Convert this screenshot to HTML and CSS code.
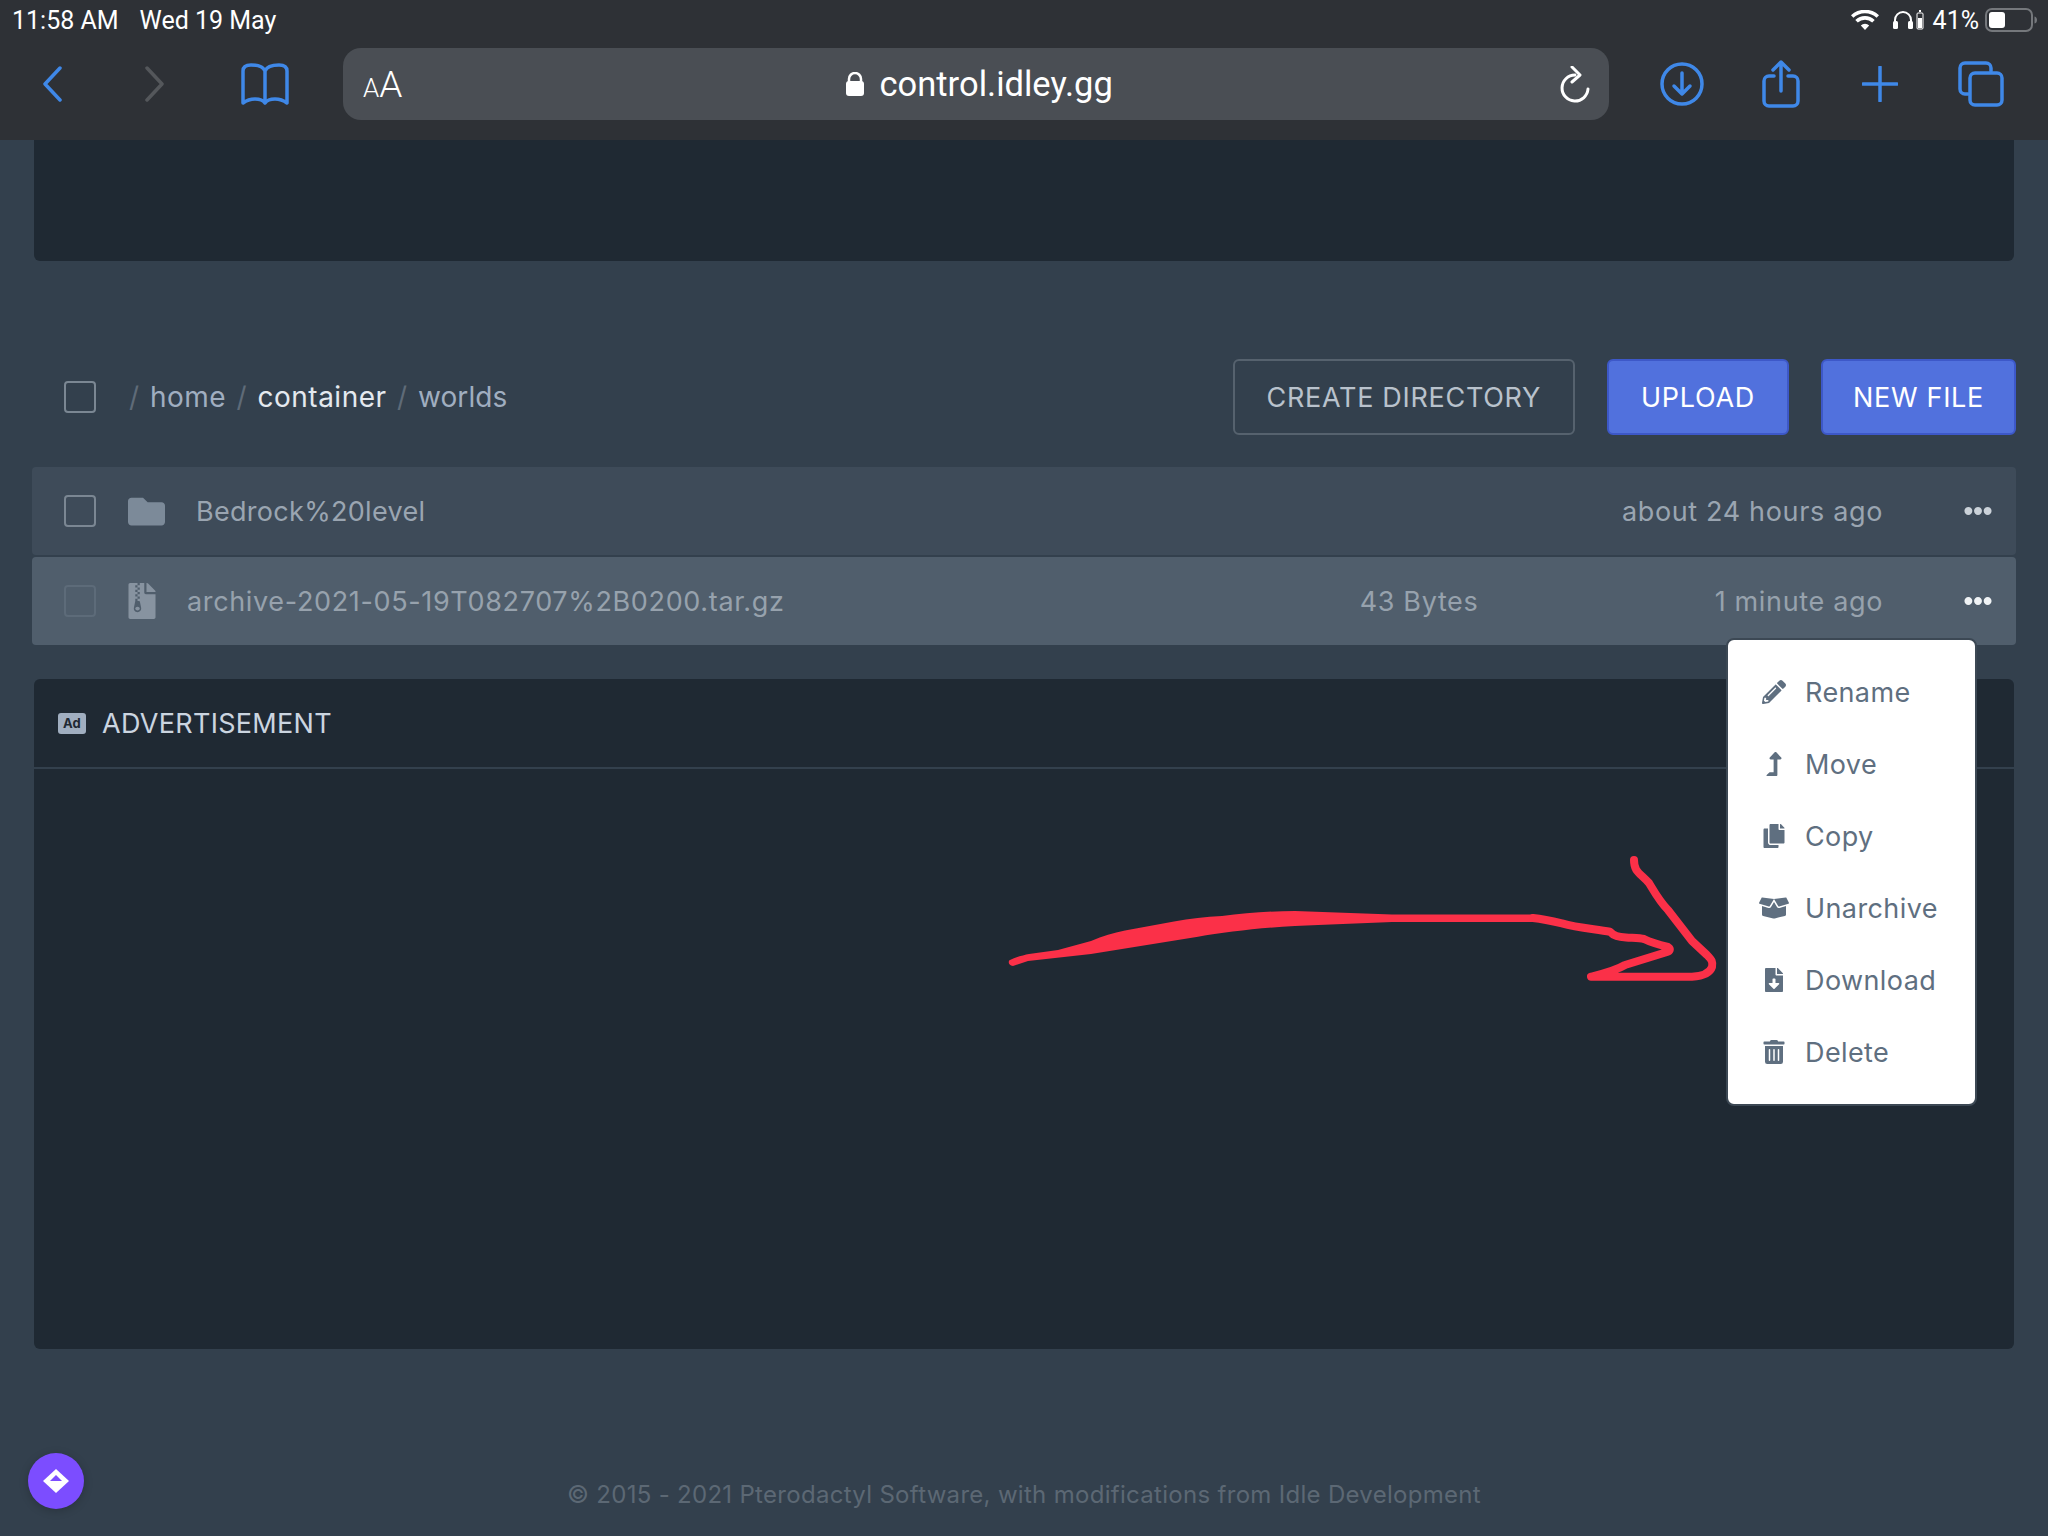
FILE: index.html
```html
<!DOCTYPE html>
<html lang="en">
<head>
    <meta charset="UTF-8">
    <title>control.idley.gg</title>
    <link rel="stylesheet" href="styles.css">
</head>
<body>
    <header class="browser">
        <div class="status-bar">
            <span class="clock">11:58 AM</span>
            <span class="date">Wed 19 May</span>
            <span class="status-right">
                <svg class="wifi" viewBox="0 0 28 20" width="28" height="20"><path d="M14 20l-4.200-4.600a6 6 0 0 1 8.400 0zM6.800 12.600l-2.500-2.700a14 14 0 0 1 19.400 0l-2.500 2.700a10.400 10.400 0 0 0-14.400 0zM2.400 7.800L0 5.200a20.500 20.500 0 0 1 28 0l-2.400 2.600a17 17 0 0 0-23.200 0z"/></svg>
                <svg class="phones" viewBox="0 0 20 19" width="20" height="19"><path d="M2 16V9a8 8 0 0 1 16 0v7" fill="none" stroke="#fff" stroke-width="2"/><rect x="0" y="10" width="5" height="8" rx="1.500"/><rect x="15" y="10" width="5" height="8" rx="1.500"/></svg>
                <svg class="phone-bat" viewBox="0 0 8 20" width="8" height="20"><rect x="1" y="3" width="6" height="16" rx="1" fill="none" stroke="#fff" stroke-width="1"/><rect x="3" y="0" width="2" height="2"/><rect x="2" y="8" width="4" height="10"/></svg>
                <span class="percent">41%</span>
                <svg class="battery" viewBox="0 0 52 24" width="52" height="24"><rect x="1" y="1" width="46" height="22" rx="6" fill="none" stroke="#75787c" stroke-width="2"/><rect x="4" y="4" width="16" height="16" rx="3" fill="#fff"/><path d="M49.500 8.500c2 .5 2.500 2 2.500 3.500s-.5 3-2.500 3.500z" fill="#75787c"/></svg>
            </span>
        </div>
        <div class="toolbar">
            <svg class="tool back" viewBox="0 0 20 36" width="20" height="36"><path d="M18 2L3 18l15 16"/></svg>
            <svg class="tool forward" viewBox="0 0 20 36" width="20" height="36"><path d="M2 2l15 16L2 34"/></svg>
            <svg class="tool book" viewBox="0 0 48 42" width="48" height="42"><path d="M24 8C22 3 17 2 10 2 5 2 2 4 2 8v32c4-3 8-4 12-4 4 0 8 1 10 4 2-3 6-4 10-4 4 0 8 1 12 4V8c0-4-3-6-8-6-7 0-12 1-14 6zm0 0v31"/></svg>
            <div class="url-bar">
                <span class="aa"><small>A</small>A</span>
                <span class="url">
                    <svg viewBox="0 0 18 24" width="18" height="24"><path d="M3 10V7a6 6 0 0 1 12 0v3" fill="none" stroke="#fff" stroke-width="2.500"/><rect x="0" y="9" width="18" height="15" rx="3"/></svg>
                    control.idley.gg
                </span>
                <svg class="reload" viewBox="0 0 30 37" width="30" height="37"><path d="M15 9a13 13 0 1 0 13 14" /><path d="M12 1l8 8-8 7"/></svg>
            </div>
            <div class="tool-right">
                <svg class="tool" viewBox="0 0 44 44" width="44" height="44"><circle cx="22" cy="22" r="20"/><path d="M22 11v21m-8-8l8 8 8-8"/></svg>
                <svg class="tool share" viewBox="0 0 38 48" width="38" height="48"><path d="M12 16H7a5 5 0 0 0-5 5v20a5 5 0 0 0 5 5h24a5 5 0 0 0 5-5V21a5 5 0 0 0-5-5h-5M19 31V2m-8 8l8-8 8 8"/></svg>
                <svg class="tool plus" viewBox="0 0 36 36" width="36" height="36"><path d="M18 1v34M1 18h34"/></svg>
                <svg class="tool" viewBox="0 0 46 46" width="46" height="46"><path d="M10 33H7a5 5 0 0 1-5-5V7a5 5 0 0 1 5-5h21a5 5 0 0 1 5 5v3"/><rect x="12" y="12" width="32" height="32" rx="5"/></svg>
            </div>
        </div>
    </header>

    <main class="content">
        <div class="panel-top"></div>

        <div class="file-head">
            <span class="check"></span>
            <div class="crumbs">
                <span class="sep">/</span> <span>home</span>
                <span class="sep">/</span> <span class="current">container</span>
                <span class="sep">/</span> <span class="last">worlds</span>
            </div>
            <button class="btn btn-outline">CREATE DIRECTORY</button>
            <button class="btn btn-blue">UPLOAD</button>
            <button class="btn btn-blue btn-new">NEW FILE</button>
        </div>

        <div class="file-row">
            <span class="check"></span>
            <svg class="file-icon" viewBox="0 0 512 512" width="37" height="37"><path d="M464 128H272l-64-64H48C21.490 64 0 85.490 0 112v288c0 26.510 21.490 48 48 48h416c26.510 0 48-21.490 48-48V176c0-26.510-21.490-48-48-48z"/></svg>
            <span class="file-name folder-name">Bedrock%20level</span>
            <span class="file-time">about 24 hours ago</span>
            <svg class="dots" viewBox="0 0 512 512" width="28" height="28"><path d="M328 256c0 39.800-32.200 72-72 72s-72-32.200-72-72 32.200-72 72-72 72 32.200 72 72zm104-72c-39.800 0-72 32.200-72 72s32.200 72 72 72 72-32.200 72-72-32.200-72-72-72zm-352 0c-39.800 0-72 32.200-72 72s32.200 72 72 72 72-32.200 72-72-32.200-72-72-72z"/></svg>
        </div>

        <div class="file-row file-row-open">
            <span class="check"></span>
            <svg class="file-icon zip" viewBox="0 0 384 512" width="28" height="36"><path d="M377 105L279.100 7c-4.500-4.500-10.600-7-17-7H256v128h128v-6.100c0-6.300-2.500-12.400-7-16.900zM128.400 336c-17.900 0-32.400 12.100-32.400 27 0 15 14.600 27 32.500 27s32.400-12.100 32.400-27-14.600-27-32.500-27zM224 136V0h-63.600v32h-32V0H24C10.700 0 0 10.700 0 24v464c0 13.300 10.700 24 24 24h336c13.300 0 24-10.700 24-24V160H248c-13.200 0-24-10.800-24-24zM95.900 32h32v32h-32zm32.300 384c-33.200 0-58-30.400-51.400-62.900L96.400 256v-32h32v-32h-32v-32h32v-32h-32V96h32V64h32v32h-32v32h32v32h-32v32h32v32h-32v32h22.100c5.700 0 10.700 4.100 11.800 9.700l17.300 87.700c6.400 32.400-18.400 62.600-51.400 62.600z"/></svg>
            <span class="file-name">archive-2021-05-19T082707%2B0200.tar.gz</span>
            <span class="file-size">43 Bytes</span>
            <span class="file-time">1 minute ago</span>
            <svg class="dots" viewBox="0 0 512 512" width="28" height="28"><path d="M328 256c0 39.800-32.200 72-72 72s-72-32.200-72-72 32.200-72 72-72 72 32.200 72 72zm104-72c-39.800 0-72 32.200-72 72s32.200 72 72 72 72-32.200 72-72-32.200-72-72-72zm-352 0c-39.800 0-72 32.200-72 72s32.200 72 72 72 72-32.200 72-72-32.200-72-72-72z"/></svg>

            <ul class="menu">
                <li><svg viewBox="0 0 512 512" width="24" height="24"><path d="M497.900 142.100l-46.100 46.100c-4.700 4.700-12.300 4.700-17 0l-111-111c-4.700-4.700-4.700-12.300 0-17l46.100-46.100c18.700-18.700 49.100-18.700 67.900 0l60.100 60.100c18.800 18.700 18.800 49.100 0 67.900zM284.200 99.800L21.600 362.400.4 483.900c-2.900 16.400 11.400 30.600 27.800 27.800l121.500-21.300 262.600-262.600c4.700-4.700 4.700-12.300 0-17l-111-111c-4.800-4.700-12.400-4.700-17.100 0zM124.100 339.900c-5.500-5.500-5.500-14.300 0-19.800l154-154c5.500-5.500 14.300-5.500 19.800 0s5.500 14.300 0 19.800l-154 154c-5.500 5.500-14.300 5.500-19.800 0zM88 424h48v36.300l-64.500 11.300-31.100-31.100L51.700 376H88v48z"/></svg>Rename</li>
                <li><svg viewBox="0 0 320 512" width="24" height="24"><path d="M313.553 119.669L209.587 7.666c-9.485-10.214-25.676-10.229-35.174 0L70.438 119.669C56.232 134.969 67.062 160 88.025 160H152v272H68.024a11.996 11.996 0 0 0-8.485 3.515l-56 56C-4.021 499.074 1.333 512 12.024 512H208c13.255 0 24-10.745 24-24V160h63.966c20.878 0 31.851-24.969 17.587-40.331z"/></svg>Move</li>
                <li><svg viewBox="0 0 448 512" width="24" height="24"><path d="M320 448v40c0 13.255-10.745 24-24 24H24c-13.255 0-24-10.745-24-24V120c0-13.255 10.745-24 24-24h72v296c0 30.879 25.121 56 56 56h168zm0-344V0H152c-13.255 0-24 10.745-24 24v368c0 13.255 10.745 24 24 24h272c13.255 0 24-10.745 24-24V128H344c-13.200 0-24-10.800-24-24zm120.971-31.029L375.029 7.029A24 24 0 0 0 358.059 0H352v96h96v-6.059a24 24 0 0 0-7.029-16.970z"/></svg>Copy</li>
                <li><svg viewBox="0 0 640 512" width="30" height="24"><path d="M425.700 256c-16.900 0-32.800-9-41.400-23.400L320 126l-64.200 106.600c-8.700 14.500-24.600 23.500-41.500 23.500-4.500 0-9-.6-13.300-1.900L64 215v178c0 14.700 10 27.500 24.200 31l216.200 54.100c10.200 2.500 20.900 2.500 31 0L551.800 424c14.200-3.600 24.200-16.400 24.200-31V215l-137 39.100c-4.300 1.300-8.800 1.900-13.300 1.900zm212.600-112.200L586.800 41c-3.100-6.200-9.800-9.800-16.700-8.900L320 64l91.700 152.100c3.800 6.300 11.400 9.300 18.500 7.300l197.900-56.500c9.900-2.900 14.700-13.900 10.200-23.100zM53.200 41L1.700 143.800c-4.600 9.200.3 20.200 10.100 23l197.900 56.500c7.100 2 14.700-1 18.500-7.300L320 64 69.800 32.100c-6.900-.8-13.500 2.700-16.600 8.900z"/></svg>Unarchive</li>
                <li><svg viewBox="0 0 384 512" width="24" height="24"><path d="M224 136V0H24C10.700 0 0 10.700 0 24v464c0 13.300 10.700 24 24 24h336c13.300 0 24-10.700 24-24V160H248c-13.200 0-24-10.800-24-24zm76.450 211.360l-96.420 95.700c-6.650 6.610-17.390 6.610-24.040 0l-96.420-95.700C73.420 337.290 80.540 320 94.820 320H160v-80c0-8.840 7.160-16 16-16h32c8.840 0 16 7.160 16 16v80h65.180c14.280 0 21.400 17.290 11.270 27.360zM377 105L279.100 7c-4.500-4.500-10.600-7-17-7H256v128h128v-6.100c0-6.300-2.500-12.400-7-16.900z"/></svg>Download</li>
                <li><svg viewBox="0 0 448 512" width="24" height="24"><path d="M32 464a48 48 0 0 0 48 48h288a48 48 0 0 0 48-48V128H32zm272-256a16 16 0 0 1 32 0v224a16 16 0 0 1-32 0zm-96 0a16 16 0 0 1 32 0v224a16 16 0 0 1-32 0zm-96 0a16 16 0 0 1 32 0v224a16 16 0 0 1-32 0zM432 32H312l-9.400-18.700A24 24 0 0 0 281.100 0H166.800a23.720 23.720 0 0 0-21.400 13.300L136 32H16A16 16 0 0 0 0 48v32a16 16 0 0 0 16 16h416a16 16 0 0 0 16-16V48a16 16 0 0 0-16-16z"/></svg>Delete</li>
            </ul>
        </div>

        <section class="ad-card">
            <div class="ad-head">
                <span class="ad-badge">Ad</span>
                <span>ADVERTISEMENT</span>
            </div>
        </section>

        <footer class="foot">© 2015 - 2021 Pterodactyl Software, with modifications from Idle Development</footer>
    </main>

    <!-- hand drawn arrow on top of the screenshot -->
    <svg class="scribble" viewBox="0 0 2048 1536" width="2048" height="1536">
        <path class="scribble-fill" d="M1010 960C1016 957 1024 955 1029 954L1058 950L1091 941C1103 936 1113 933 1125 930.500L1174 921.500C1190 918.500 1205 917 1222 916C1245 913 1270 911 1295 911L1392 914.500L1533 914.500L1533 922L1392 922C1360 923 1325 925 1295 926C1260 928 1225 932 1198 936.700L1091 954L1028 961L1013 966C1008 965 1008 961 1010 960Z"/>
        <path class="scribble-line" d="M1533 918C1542 919 1552 921 1562 923.300C1578 928 1596 929 1610 931.700C1614 936 1618 937 1626 937.500C1634 938 1640 938 1644 939C1652 943 1660 945 1668 947C1671 949 1670 951 1667 952L1625 965C1615 971 1602 974 1591 976.700L1692 976.700C1703 976 1710 973 1712 967C1713 962 1712 960 1707 955L1692 941L1668 910C1660 902 1655 893 1649 883C1640 873 1634 872 1634 860"/>
    </svg>

    <div class="chat-bubble">
        <svg viewBox="0 0 26 24" width="26" height="24"><path d="M13 0l13 12-13 12L0 12z" fill="#fff"/><path d="M13 6l6 6H7z" fill="#7c4dff"/></svg>
    </div>
</body>
</html>
```

FILE: styles.css
```css
* {
    box-sizing: border-box;
}

body {
    margin: 0;
    width: 2048px;
    height: 1536px;
    overflow: hidden;
    position: relative;
    background-color: #33404d;
    font-family: Inter, "Noto Sans", sans-serif;
    color: #a0aec0;
}

/* safari chrome */
.browser {
    height: 140px;
    background-color: #2e3136;
    color: #fff;
    font-family: Roboto, Inter, sans-serif;
}
.status-bar {
    height: 48px;
    display: flex;
    align-items: center;
    padding: 0 11px 8px 12px;
    font-size: 25px;
}
.date {
    margin-left: 21px;
}
.status-right {
    margin-left: auto;
    display: flex;
    align-items: center;
}
.status-right svg {
    fill: #fff;
}
.wifi {
    margin-right: 3px;
}
.phones {
    margin-left: 11px;
}
.phone-bat {
    margin-left: 3px;
}
.percent {
    margin-left: 9px;
}
.battery {
    margin-left: 6px;
}

.toolbar {
    height: 92px;
    display: flex;
    align-items: center;
    padding: 0 44px 20px 42px;
}
.tool {
    fill: none;
    stroke: #3f88e8;
    stroke-width: 3.500;
    stroke-linecap: round;
    stroke-linejoin: round;
    flex: none;
}
.forward {
    margin-left: 83px;
    stroke: #54575b;
}
.book {
    margin-left: 76px;
}
.share {
    margin-right: 5px;
}
.plus {
    margin-right: 2px;
}
.url-bar {
    margin-left: 54px;
    width: 1266px;
    height: 72px;
    flex: none;
    display: flex;
    align-items: center;
    justify-content: space-between;
    padding: 0 19px 0 20px;
    background-color: #4a4e54;
    border-radius: 18px;
}
.aa {
    font-size: 37px;
    font-weight: 300;
}
.aa small {
    font-size: 26px;
}
.url {
    display: flex;
    align-items: center;
    gap: 16px;
    font-size: 34.500px;
    margin-left: -4px;
}
.url svg {
    fill: #fff;
}
.reload {
    fill: none;
    stroke: #fff;
    stroke-width: 3;
    stroke-linecap: round;
    stroke-linejoin: round;
}
.tool-right {
    margin-left: auto;
    display: flex;
    align-items: center;
    justify-content: space-between;
    width: 344px;
}

/* page */
.content {
    padding: 0 32px;
}
.panel-top {
    height: 121px;
    margin: 0 2px;
    background-color: #1f2933;
    border-radius: 0 0 6px 6px;
}

.file-head {
    margin-top: 98px;
    height: 76px;
    display: flex;
    align-items: center;
    padding-left: 32px;
}
.check {
    display: block;
    flex: none;
    width: 32px;
    height: 32px;
    border: 2px solid #7b8793;
    border-radius: 4px;
}
.crumbs {
    flex: 1;
    margin-left: 31px;
    font-size: 28px;
    letter-spacing: .5px;
    color: #a0aec0;
}
.crumbs .sep {
    margin: 0 2px;
    color: #5f6b78;
}
.crumbs .current {
    color: #e4e9ef;
}
.crumbs .last {
    letter-spacing: .1px;
}
.btn {
    height: 76px;
    padding: 0 32px;
    margin-left: 32px;
    border-radius: 6px;
    font-family: inherit;
    font-size: 27px;
    letter-spacing: .7px;
}
.btn-outline {
    background: transparent;
    border: 2px solid #56626e;
    color: #b9c2cc;
}
.btn-blue {
    background-color: #5171dd;
    border: 2px solid #3d58c8;
    color: #fff;
}
.btn-new {
    padding: 0 30px;
}

.file-row {
    position: relative;
    height: 88px;
    margin-top: 32px;
    display: flex;
    align-items: center;
    padding-left: 32px;
    background-color: #3e4b59;
    border-radius: 4px;
    font-size: 27px;
    letter-spacing: .65px;
    color: #9aa5b1;
}
.file-row-open {
    margin-top: 2px;
    background-color: #505e6c;
    color: #97a2ad;
}
.file-row-open .check {
    border-color: #5d6b79;
}
.file-icon {
    margin-left: 32px;
    fill: #7c8a99;
    flex: none;
}
.file-row-open .file-icon {
    fill: #8793a0;
}
.file-name {
    flex: 1;
    margin-left: 31px;
}
.folder-name {
    letter-spacing: .3px;
}
.file-size {
    width: 355px;
}
.file-time {
    margin-right: 81px;
}
.dots {
    fill: #cbd2d9;
    flex: none;
    margin-right: 24px;
}
.file-row-open .dots {
    fill: #f0f3f5;
}

/* dropdown for the open row */
.menu {
    position: absolute;
    top: 81px;
    right: 39px;
    width: 251px;
    height: 468px;
    margin: 0;
    padding: 16px 0;
    list-style: none;
    background-color: #fff;
    border: 2px solid #3c4854;
    border-radius: 8px;
    font-size: 27px;
    letter-spacing: .4px;
    color: #5f6f80;
    z-index: 2;
}
.menu li {
    height: 72px;
    display: flex;
    align-items: center;
    padding-left: 77px;
    position: relative;
}
.menu svg {
    position: absolute;
    left: 30px;
    width: 32px;
    fill: #5f6f80;
}

.ad-card {
    margin: 34px 2px 0;
    height: 670px;
    background-color: #1f2933;
    border-radius: 6px;
}
.ad-head {
    height: 90px;
    display: flex;
    align-items: center;
    padding-left: 24px;
    border-bottom: 2px solid #33404d;
    font-size: 27px;
    letter-spacing: .3px;
    color: #cbd5e0;
}
.ad-badge {
    width: 28px;
    height: 21px;
    margin-right: 16px;
    background-color: #a0aec0;
    border-radius: 3px;
    color: #1f2933;
    font-size: 13px;
    font-weight: 700;
    line-height: 21px;
    text-align: center;
}

.foot {
    margin-top: 131px;
    text-align: center;
    font-size: 24px;
    color: #5c6874;
    letter-spacing: .3px;
}

.scribble {
    position: absolute;
    top: 0;
    left: 0;
    pointer-events: none;
    z-index: 3;
}
.scribble-fill {
    fill: #fb3048;
}
.scribble-line {
    fill: none;
    stroke: #fb3048;
    stroke-width: 8;
    stroke-linecap: round;
    stroke-linejoin: round;
}

.chat-bubble {
    position: absolute;
    left: 28px;
    top: 1453px;
    width: 56px;
    height: 56px;
    display: flex;
    align-items: center;
    justify-content: center;
    background-color: #7c4dff;
    border-radius: 50%;
    box-shadow: 0 2px 10px rgba(0, 0, 0, .2);
}
```
